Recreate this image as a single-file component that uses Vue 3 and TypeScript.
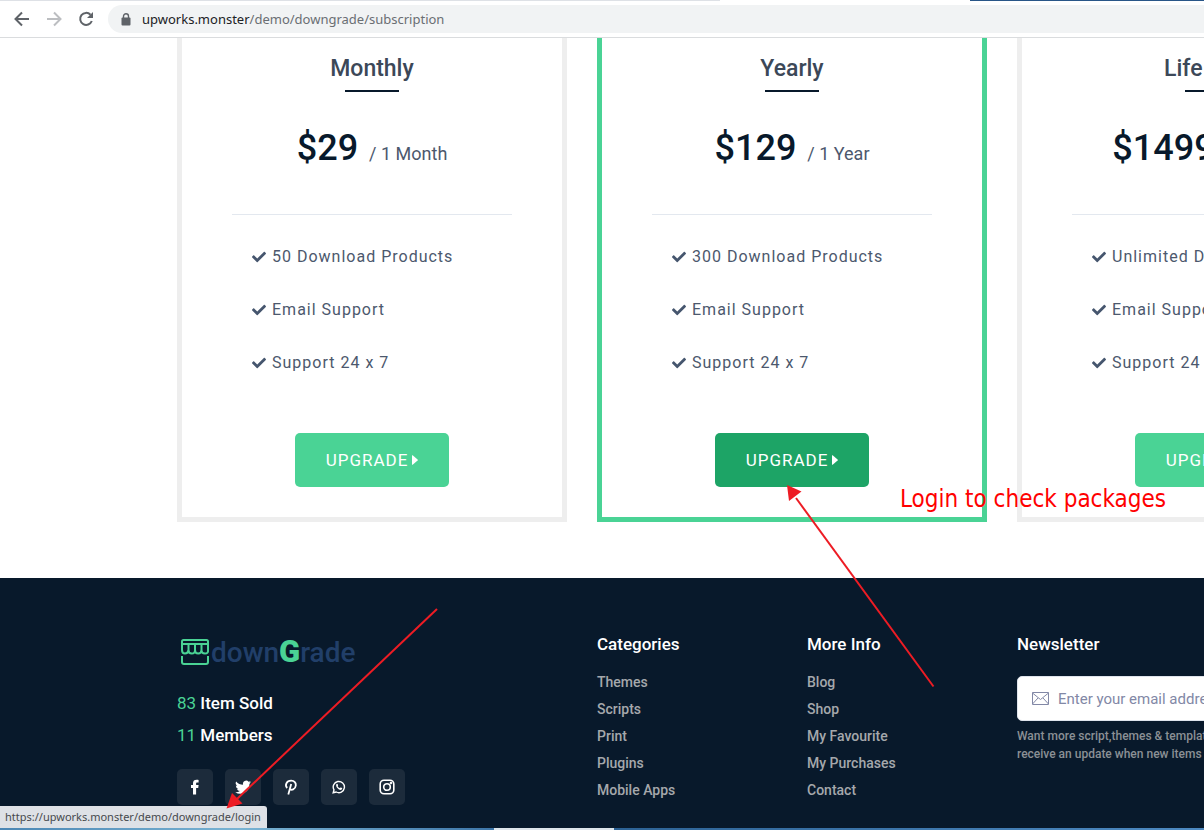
<script setup lang="ts">
interface Plan {
  name: string
  price: string
  period: string
  features: string[]
  featured: boolean
}

const plans: Plan[] = [
  { name: 'Monthly', price: '$29', period: '/ 1 Month', features: ['50 Download Products', 'Email Support', 'Support 24 x 7'], featured: false },
  { name: 'Yearly', price: '$129', period: '/ 1 Year', features: ['300 Download Products', 'Email Support', 'Support 24 x 7'], featured: true },
  { name: 'Life Time', price: '$1499', period: '/ Life Time', features: ['Unlimited Download Products', 'Email Support', 'Support 24 x 7'], featured: false },
]

const linkGroups: { title: string; links: string[] }[] = [
  { title: 'Categories', links: ['Themes', 'Scripts', 'Print', 'Plugins', 'Mobile Apps'] },
  { title: 'More Info', links: ['Blog', 'Shop', 'My Favourite', 'My Purchases', 'Contact'] },
]
</script>

<template>
  <div class="window">
    <header class="toolbar">
      <div class="tabstrip"><span class="tab-edge"></span><span class="tab-active"></span><span class="frame"></span></div>
      <div class="nav">
        <button class="nav-btn" type="button" aria-label="Back">
          <svg width="16" height="16" viewBox="0 0 16 16" fill="none" stroke="#5f6368" stroke-width="2"><path d="M15 8H2M8 1.5L1.5 8L8 14.5" /></svg>
        </button>
        <button class="nav-btn" type="button" aria-label="Forward">
          <svg width="16" height="16" viewBox="0 0 16 16" fill="none" stroke="#bcbec1" stroke-width="2"><path d="M1 8H14M8 1.5L14.5 8L8 14.5" /></svg>
        </button>
        <button class="nav-btn" type="button" aria-label="Reload">
          <svg width="16" height="16" viewBox="0 0 16 16"><path d="M12.5 3.7A6 6 0 1 0 13.8 10" fill="none" stroke="#5f6368" stroke-width="2" /><path d="M15 1V7H9Z" fill="#5f6368" /></svg>
        </button>
        <div class="address">
          <svg width="10" height="13" viewBox="0 0 10 13"><path d="M2.5 5V3.3a2.5 2.5 0 0 1 5 0V5" fill="none" stroke="#5f6368" stroke-width="1.4" /><rect x="0.5" y="4.5" width="9" height="8" rx="1" fill="#5f6368" /></svg>
          <p class="url"><span class="host">upworks.monster</span>/demo/downgrade/subscription</p>
        </div>
      </div>
    </header>

    <main class="plans">
      <article v-for="plan in plans" :key="plan.name" class="plan" :class="{ featured: plan.featured }">
        <h3 class="plan-name">{{ plan.name }}</h3>
        <p class="price"><strong>{{ plan.price }}</strong><span>{{ plan.period }}</span></p>
        <ul class="features">
          <li v-for="feature in plan.features" :key="feature">
            <svg width="14" height="14" viewBox="0 0 512 512" fill="currentColor"><path d="M173.898 439.404l-166.400-166.400c-9.997-9.997-9.997-26.206 0-36.204l36.203-36.204c9.997-9.998 26.207-9.998 36.204 0L192 312.690 432.095 72.596c9.997-9.997 26.207-9.997 36.204 0l36.203 36.204c9.997 9.997 9.997 26.206 0 36.204l-294.400 294.401c-9.998 9.997-26.207 9.997-36.204-.001z" /></svg>
            {{ feature }}
          </li>
        </ul>
        <a class="upgrade" href="#">UPGRADE
          <svg width="6" height="10" viewBox="0 0 6 10"><path d="M0 0.6Q0 0 0.6 0.3L5.6 4.5Q6 5 5.6 5.5L0.6 9.7Q0 10 0 9.4Z" fill="currentColor" /></svg>
        </a>
      </article>
    </main>

    <footer class="footer">
      <section class="brand">
        <a class="logo" href="#">
          <svg width="28" height="26" viewBox="0 0 28 26" fill="none" stroke="#4ad395" stroke-width="2">
            <path d="M1 6V2.5Q1 1 2.5 1H25.5Q27 1 27 2.5V6M1 17V23Q1 25 3 25H25Q27 25 27 23V17M1 5H27" />
            <path d="M1 5V11Q1 14.5 4 14.5T7.5 11V5V11Q7.5 14.5 10.8 14.5T14 11V5V11Q14 14.5 17.2 14.5T20.5 11V5V11Q20.5 14.5 24 14.5T27 11V5" />
          </svg>
          <span class="wordmark">down<b>G</b>rade</span>
        </a>
        <p class="stat"><span>83</span> Item Sold</p>
        <p class="stat"><span>11</span> Members</p>
        <div class="social">
          <a href="#" aria-label="Facebook"><svg width="16" height="16" viewBox="0 0 16 16" fill="#fff"><path d="M6 15.500V9H4V6H6V4.300C6 1.900 7.400.8 9.600.8c1 0 1.700.1 2 .1v2.600h-1.300c-1 0-1.200.5-1.200 1.300V6h2.500L11.200 9H9.100v6.500z" /></svg></a>
          <a href="#" aria-label="Twitter"><svg width="16" height="16" viewBox="0 0 16 16" fill="#fff"><path d="M16 3.200a6 6 0 0 1-1.700.5 3 3 0 0 0 1.300-1.700 6 6 0 0 1-2 .8 3.200 3.200 0 0 0-5.500 3A9 9 0 0 1 1.200 2.500a3.200 3.200 0 0 0 1 4.300A3 3 0 0 1 .8 6.400a3.200 3.200 0 0 0 2.500 3.200 3 3 0 0 1-1.400.1 3.200 3.200 0 0 0 3 2.200A6.500 6.500 0 0 1 .2 13.200 9.200 9.200 0 0 0 14.400 5Z" /></svg></a>
          <a href="#" aria-label="Pinterest"><svg width="16" height="16" viewBox="0 0 16 16" fill="none" stroke="#fff" stroke-width="1.800"><path d="M4.200 9C1.600 6.500 3.300 1.700 8.200 1.700c3.200 0 4.900 2.100 4.600 4.800-.4 4-4.600 5.400-6 3.100M8.200 5L5.300 15.500" /></svg></a>
          <a href="#" aria-label="WhatsApp"><svg width="14" height="14" viewBox="0 0 14 14"><path d="M1.200 12.800L2 9.900A5.600 5.600 0 1 1 4.200 12Z" fill="none" stroke="#fff" stroke-width="1.400" /><path d="M4.300 4.200c.6-.8 1.100-.6 1.400 0l.4 1c.1.400-.5.700-.4 1 .5.900 1.200 1.500 2 1.900.4.100.7-.8 1.100-.7l1.300.7c.3.300 0 1.300-.7 1.700C7.300 10.600 3.300 7 4.300 4.200Z" fill="#fff" /></svg></a>
          <a href="#" aria-label="Instagram"><svg width="16" height="16" viewBox="0 0 16 16" fill="none" stroke="#fff" stroke-width="1.600"><rect x="1.200" y="1.200" width="13.600" height="13.600" rx="3.800" /><circle cx="8" cy="8" r="3.300" /><circle cx="12" cy="4" r="0.500" /></svg></a>
        </div>
      </section>

      <nav v-for="group in linkGroups" :key="group.title" class="links">
        <h4>{{ group.title }}</h4>
        <ul>
          <li v-for="link in group.links" :key="link"><a href="#">{{ link }}</a></li>
        </ul>
      </nav>

      <section class="newsletter">
        <h4>Newsletter</h4>
        <label class="field">
          <svg width="17" height="13" viewBox="0 0 17 13" fill="none" stroke="#8288a6"><path d="M.5 .5H16.500V12.500H.5ZM.5 1L8.500 7.500L16.500 1M.5 12L6 6M16.500 12L11 6" /></svg>
          <input type="email" placeholder="Enter your email address" aria-label="Email address" />
        </label>
        <p>Want more script,themes &amp; templates? Subscribe to<br />receive an update when new items arrive!</p>
      </section>
    </footer>
    <div class="taskbar"></div>

    <div class="status">https://upworks.monster/demo/downgrade/login</div>
    <svg class="marks" width="1204" height="830" viewBox="0 0 1204 830" aria-hidden="true">
      <g stroke="#ed1c24" stroke-width="2"><path d="M437 609L237 799" /><path d="M933.500 686.500L796 498" /></g>
      <g fill="#ed1c24"><path d="M226.500 808.500L232 793L242.500 803.500Z" /><path d="M787 485L801.500 491.500L789 501Z" /></g>
    </svg>
    <div class="note">Login to check packages</div>
  </div>
</template>

<style>
body { margin: 0; }
</style>

<style scoped>
* { box-sizing: border-box; }
h3, h4, p, ul { margin: 0; padding: 0; }
ul { list-style: none; }
a { color: inherit; text-decoration: none; }
svg { flex: none; }
.window { position: relative; display: flex; flex-direction: column; min-height: 100vh; overflow: hidden; background: #fff; font-family: Roboto, "Liberation Sans", sans-serif; }
.toolbar { height: 38px; border-bottom: 1px solid #dadcde; }
.tabstrip { display: flex; height: 1px; }
.tab-edge { flex: 0 0 720px; background: #dee1e6; }
.tab-active { flex: 0 0 250px; }
.frame { flex: 1; background: #285587; }
.nav { display: flex; align-items: center; padding: 4px 0 0 6px; }
.nav-btn { display: flex; align-items: center; justify-content: center; width: 32px; height: 28px; padding: 0; border: 0; background: none; }
.address { display: flex; flex: 1; align-items: center; gap: 11px; height: 28px; margin-left: 6px; padding-left: 13px; border-radius: 14px 0 0 14px; background: #f1f3f4; }
.url { color: #6a6e73; font: 13px/20px "Noto Sans", sans-serif; }
.host { color: #202124; }

.plans { display: flex; gap: 30px; padding: 0 0 56px 177px; }
.plan { display: flex; flex: 0 0 390px; flex-direction: column; align-items: center; padding: 14px 50px 30px; border: 5px solid #eee; border-top: 0; }
.plan.featured { border-color: #4ad395; }
.plan-name { display: flex; flex-direction: column; align-items: center; color: #3c4858; font-size: 23px; font-weight: 500; line-height: 34px; }
.plan-name::after { width: 54px; height: 2px; margin-top: 4px; background: #08192b; content: ""; }
.price { display: flex; align-items: baseline; align-self: stretch; justify-content: center; gap: 11px; height: 123px; border-bottom: 1px solid #e3e8ef; color: #4c586d; font-size: 18px; line-height: 112px; white-space: nowrap; }
.price strong { color: #08192b; font-size: 36px; font-weight: 500; }
.features { align-self: stretch; padding: 15px 0 44px 20px; color: #4c586d; font-size: 16px; letter-spacing: 1px; line-height: 53px; }
.features li { display: flex; align-items: center; gap: 6px; white-space: nowrap; }
.features svg { color: #46566e; }
.upgrade { display: flex; align-items: center; justify-content: center; gap: 4px; width: 154px; height: 54px; border-radius: 5px; background: #4ad395; color: #fff; font-size: 17px; letter-spacing: 1px; }
.featured .upgrade { background: #1da466; }

.footer { display: grid; flex: 1; grid-template-columns: 390px 180px 180px 390px; gap: 30px; padding: 52px 0 23px 177px; background: #08192b; color: #fff; }
.brand { padding-top: 5px; }
.logo { display: flex; align-items: center; gap: 2px; height: 34px; margin-bottom: 18px; padding-left: 4px; }
.wordmark { color: #213f69; font-size: 28px; font-weight: 500; line-height: 34px; }
.wordmark b { color: #4ad395; font-size: 31px; font-weight: 900; }
.stat { font-size: 17px; font-weight: 500; line-height: 32px; }
.stat span { color: #4ad395; font-weight: 400; }
.social { display: flex; gap: 12px; margin-top: 18px; }
.social a { display: flex; align-items: center; justify-content: center; width: 36px; height: 36px; border-radius: 5px; background: #1c2b3b; }
h4 { font-size: 17px; font-weight: 500; line-height: 28px; }
.links ul { padding-top: 11px; }
.links li { color: #a5a8ac; font-size: 14px; font-weight: 500; line-height: 27px; }
.field { display: flex; align-items: center; gap: 9px; height: 45px; margin: 18px 0 6px; padding-left: 14px; border: 1px solid #dfe4ec; border-radius: 5px; background: #fff; }
.field input { flex: 1; min-width: 0; padding: 0; border: 0; outline: 0; background: none; color: #4c586d; font: 15px/24px Roboto, sans-serif; }
.field input::placeholder { color: #8288a6; opacity: 1; }
.newsletter p { color: #8b9095; font-size: 12px; font-weight: 500; line-height: 18px; }
.taskbar { height: 2px; background: linear-gradient(90deg, #4b86b4, #79b3d3 20%, #3e77aa 41%, #dde5eb 41%, #dde5eb 51%, #2c6295 51%, #4d8ac2); }

.status { position: absolute; bottom: 2px; left: 0; padding: 0 6px 0 5px; border-radius: 0 3px 0 0; background: #dee1e6; color: #46494d; font: 11px/22px "Noto Sans", sans-serif; }
.marks { position: absolute; top: 0; left: 0; pointer-events: none; }
.note { position: absolute; top: 484px; left: 900px; color: #f00; font: 24px/30px "DejaVu Sans Condensed", "DejaVu Sans", sans-serif; white-space: nowrap; }
</style>
